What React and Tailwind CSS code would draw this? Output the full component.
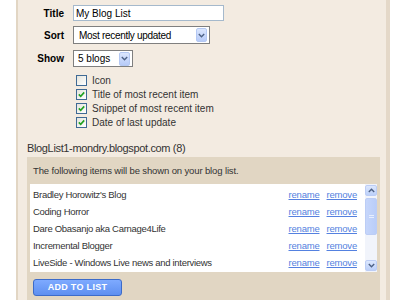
import React from 'react'

const blogs = [
  "Bradley Horowitz's Blog",
  'Coding Horror',
  'Dare Obasanjo aka Carnage4Life',
  'Incremental Blogger',
  'LiveSide - Windows Live news and interviews',
]

const options = [
  { label: 'Icon', checked: false },
  { label: 'Title of most recent item', checked: true },
  { label: 'Snippet of most recent item', checked: true },
  { label: 'Date of last update', checked: true },
]

function Chevron({ up = false }) {
  return (
    <svg width="7" height="5" viewBox="0 0 7 5" className={up ? 'rotate-180' : ''}>
      <path d="M0.8 1 L3.5 3.7 L6.2 1" fill="none" stroke="#4d6185" strokeWidth="1.4" />
    </svg>
  )
}

function DropButton() {
  return (
    <div className="flex h-[14px] w-[11px] items-center justify-center rounded-[2px] border border-[#b4c8f3] bg-gradient-to-b from-[#dbe6fd] to-[#b7cbf8]">
      <Chevron />
    </div>
  )
}

function Checkbox({ checked }) {
  return (
    <div className="flex h-[11px] w-[11px] items-center justify-center border border-[#3f6a95] bg-gradient-to-br from-[#e4e4dd] to-white">
      {checked && (
        <svg width="7" height="7" viewBox="0 0 7 7">
          <path d="M0.8 3.4 L2.7 5.4 L6.2 1.4" fill="none" stroke="#21a121" strokeWidth="1.6" />
        </svg>
      )}
    </div>
  )
}

function FieldRow({ label, className = '', children }) {
  return (
    <div className={`flex items-center gap-[9px] ${className}`}>
      <div className="w-[46px] text-right font-bold text-black">{label}</div>
      {children}
    </div>
  )
}

export default function App() {
  return (
    <div className="flex h-[300px] w-[400px] overflow-hidden bg-white font-['Liberation_Sans',Arial,sans-serif] text-[10px] leading-[15px] text-[#333]">
      <div className="w-[16px] shrink-0" />
      <div className="flex w-[374px] shrink-0 flex-col border-l-2 border-r-4 border-l-[#e2d6c4] border-r-[#e4d8c8] bg-[#f3ebe1] pt-[5px]">
        <FieldRow label="Title">
          <div className="flex h-[16px] w-[151px] items-center border border-[#a5b9cc] bg-white pl-[2px] text-[10px] text-black">
            My Blog List
          </div>
        </FieldRow>
        <FieldRow label="Sort" className="mt-[5px]">
          <div className="flex h-[18px] w-[137px] items-center justify-between border border-[#7f7f7f] bg-white pl-[5px] pr-[2px] text-[10px] tracking-[-0.3px] text-black">
            Most recently updated
            <DropButton />
          </div>
        </FieldRow>
        <FieldRow label="Show" className="mt-[6px]">
          <div className="flex h-[17px] w-[60px] items-center justify-between border border-[#7f7f7f] bg-white pl-[4px] pr-[2px] text-[10px] text-black">
            5 blogs
            <DropButton />
          </div>
        </FieldRow>

        <div className="mt-[6px] flex flex-col pl-[58px]">
          {options.map((o) => (
            <div key={o.label} className="flex h-[14px] items-center gap-[5px]">
              <Checkbox checked={o.checked} />
              <span>{o.label}</span>
            </div>
          ))}
        </div>

        <div className="mt-[11px] pl-[9px] text-[11px] leading-[16px] tracking-[-0.35px]">
          BlogList1-mondry.blogspot.com (8)
        </div>

        <div className="ml-[9px] mr-[6px] mt-[1px] flex-1 bg-[#e1d6c3] px-[3px] pt-[6px]">
          <div className="pl-[3px] text-[9.5px] tracking-[-0.13px]">
            The following items will be shown on your blog list.
          </div>
          <div className="mt-[6px] flex h-[88px] bg-white">
            <div className="flex flex-1 flex-col pt-[2px]">
              {blogs.map((b) => (
                <div key={b} className="flex h-[17px] items-center pl-[3px] pr-[8px]">
                  <span className="flex-1 text-[9.5px] tracking-[-0.3px]">{b}</span>
                  <a className="text-[9.5px] tracking-[-0.2px] text-[#5481e0] underline">rename</a>
                  <a className="ml-[7px] text-[9.5px] tracking-[-0.2px] text-[#5481e0] underline">remove</a>
                </div>
              ))}
            </div>
            <div className="flex w-[12px] flex-col bg-[#f1f4fb] py-[1px]">
              <div className="flex h-[11px] items-center justify-center rounded-[2px] border border-[#bccdf5] bg-gradient-to-b from-[#dce7fd] to-[#bcd0f9]">
                <Chevron up />
              </div>
              <div className="mt-[2px] flex h-[37px] flex-col items-center justify-center gap-[1px] rounded-[2px] border border-[#bccdf5] bg-gradient-to-r from-[#c6d6fb] to-[#b9cdf8]">
                <div className="h-px w-[5px] bg-[#e6eefe]" />
                <div className="h-px w-[5px] bg-[#e6eefe]" />
              </div>
              <div className="flex-1" />
              <div className="flex h-[11px] items-center justify-center rounded-[2px] border border-[#bccdf5] bg-gradient-to-b from-[#dce7fd] to-[#bcd0f9]">
                <Chevron />
              </div>
            </div>
          </div>
          <button className="ml-[3px] mt-[7px] flex h-[17px] w-[89px] items-center justify-center rounded-[3px] border border-[#3c6bc9] bg-gradient-to-b from-[#7eaaff] to-[#5e8ff0] text-[9px] font-bold leading-none tracking-[0.3px] text-white">
            ADD TO LIST
          </button>
        </div>
      </div>
      <div className="flex-1" />
    </div>
  )
}
